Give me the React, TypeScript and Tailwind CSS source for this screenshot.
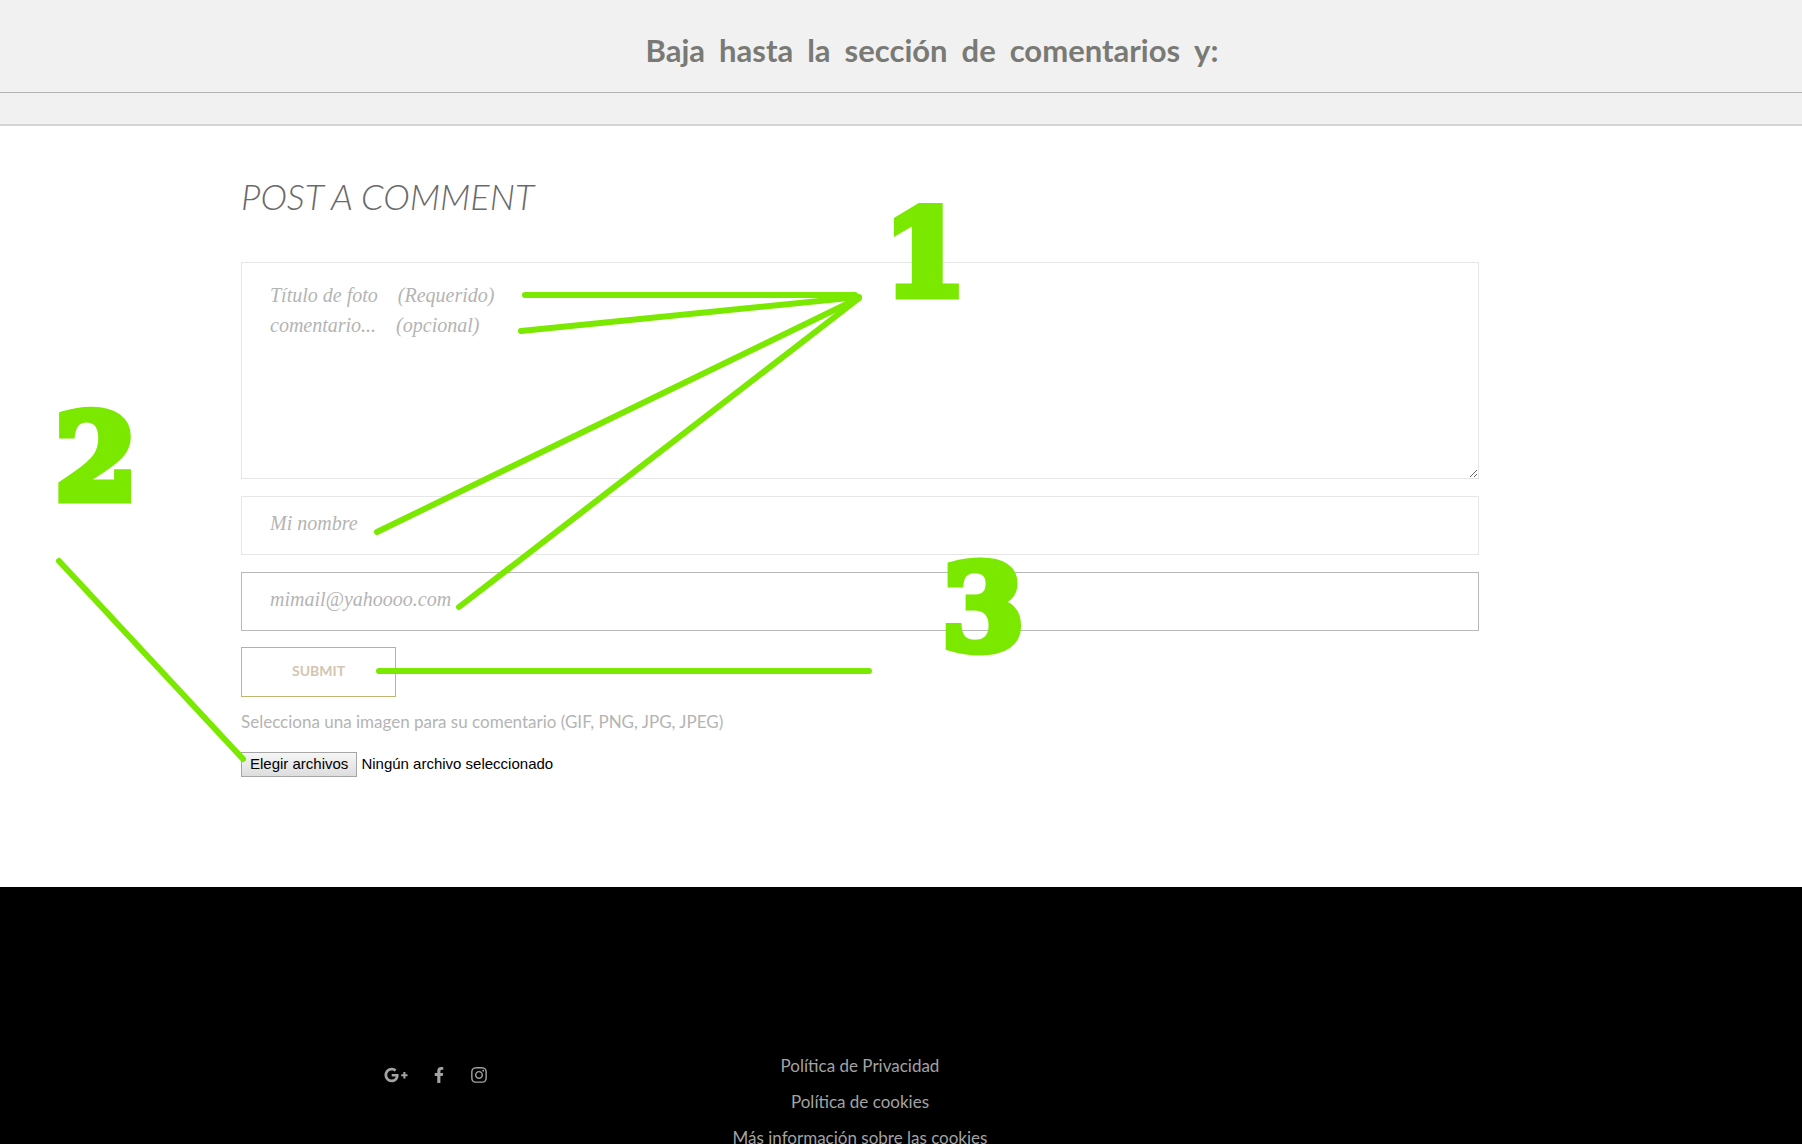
import { FaFacebookF, FaGooglePlusG, FaInstagram } from "react-icons/fa";

const NB = "\u00a0";
const heading = ["Baja", "hasta", "la", "sección", "de", "comentarios", "y:"];
const messageHint = `Título de foto${NB}${NB}${NB} (Requerido)\ncomentario...${NB}${NB}${NB} (opcional)`;

const arrows = [
  "M284 169H614",
  "M280 205L618 171",
  "M136 406L618 172",
  "M218 481L617 173",
  "M138 545H628",
  "M-182 435L2 633",
];

const field =
  "block w-full border px-7 font-['Liberation_Serif',serif] text-[20px] italic leading-[30px] text-[#777] placeholder:text-[#b4b4b4] outline-none";

const digit =
  "absolute font-['DejaVu_Serif',serif] text-[118px] font-bold leading-none text-[#7be800] [-webkit-text-stroke:9px_#7be800]";

function Header() {
  return (
    <header className="bg-[#f1f1f1]">
      <div className="flex h-[93px] items-center justify-center border-b border-[#b4b4b4] pl-[62px] pt-2">
        <h1 className="flex gap-[14px] font-[Lato,sans-serif] text-[31px] font-bold leading-10 text-[#797a75]">
          {heading.map((word) => (
            <span key={word}>{word}</span>
          ))}
        </h1>
      </div>
      <div className="h-[33px] border-b-2 border-[#d4d4d4]" />
    </header>
  );
}

function Annotations() {
  return (
    <div className="pointer-events-none absolute inset-0">
      <svg className="absolute left-0 top-0 overflow-visible" width="1" height="1" aria-hidden="true">
        <g fill="none" stroke="#7be800" strokeWidth="6" strokeLinecap="round">
          {arrows.map((d) => (
            <path key={d} d={d} />
          ))}
        </g>
      </svg>
      <span className={`${digit} left-[643px] top-[69px]`}>1</span>
      <span className={`${digit} left-[-186px] top-[273px]`}>2</span>
      <span className={`${digit} left-[701px] top-[423px]`}>3</span>
    </div>
  );
}

function CommentForm() {
  return (
    <form className="relative mx-auto w-full max-w-[1238px] pb-[110px] pt-[48px]" onSubmit={(e) => e.preventDefault()}>
      <h2 className="font-[Lato,sans-serif] text-[36px] font-light italic leading-[44px] text-[#6a6a6a]">POST A COMMENT</h2>
      <textarea
        aria-label="Comentario"
        placeholder={messageHint}
        className={`${field} mt-[44px] h-[217px] border-[#e6e6e6] py-[17px]`}
      />
      <input aria-label="Nombre" placeholder="Mi nombre" className={`${field} mt-[17px] h-[59px] border-[#e6e6e6] pb-1`} />
      <input
        aria-label="Correo"
        type="email"
        placeholder="mimail@yahoooo.com"
        className={`${field} mt-[17px] h-[59px] border-[#b8b8b8] pb-1`}
      />
      <button
        type="submit"
        className="mt-4 block h-[50px] w-[155px] border border-[#bdb772] pb-1 font-[Lato,sans-serif] text-[14px] font-bold text-[#d2c6b0]"
      >
        SUBMIT
      </button>
      <p className="mt-3 font-[Lato,sans-serif] text-[17px] leading-[26px] text-[#b4b4b4]">
        Selecciona una imagen para su comentario (GIF, PNG, JPG, JPEG)
      </p>
      <label className="mt-[17px] flex w-fit items-center gap-1 font-['Liberation_Sans',sans-serif] text-[15px] text-black">
        <input type="file" multiple className="sr-only" />
        <span className="flex h-[25px] items-center border border-[#a6a6a6] bg-linear-to-b from-[#f6f6f6] to-[#dddddd] px-2">
          Elegir archivos
        </span>
        <span>Ningún archivo seleccionado</span>
      </label>
      <Annotations />
    </form>
  );
}

function Footer() {
  return (
    <footer className="bg-black pb-16 pr-[82px] pt-[161px] text-[#a3a3a3]">
      <div className="mx-auto grid w-full max-w-[1238px] grid-cols-3">
        <div className="flex h-[54px] items-center justify-center gap-[23px] pr-[22px]">
          <a href="#google" aria-label="Google Plus">
            <FaGooglePlusG size={24} />
          </a>
          <a href="#facebook" aria-label="Facebook">
            <FaFacebookF size={16} />
          </a>
          <a href="#instagram" aria-label="Instagram">
            <FaInstagram size={18} />
          </a>
        </div>
        <nav className="flex flex-col items-center font-[Lato,sans-serif] text-[17px] leading-9">
          <a href="#privacidad">Política de Privacidad</a>
          <a href="#cookies">Política de cookies</a>
          <a href="#informacion">Más información sobre las cookies</a>
        </nav>
      </div>
    </footer>
  );
}

export default function App() {
  return (
    <div className="h-screen overflow-x-hidden overflow-y-auto bg-white [scrollbar-width:none]">
      <Header />
      <main className="pr-[82px]">
        <CommentForm />
      </main>
      <Footer />
    </div>
  );
}
